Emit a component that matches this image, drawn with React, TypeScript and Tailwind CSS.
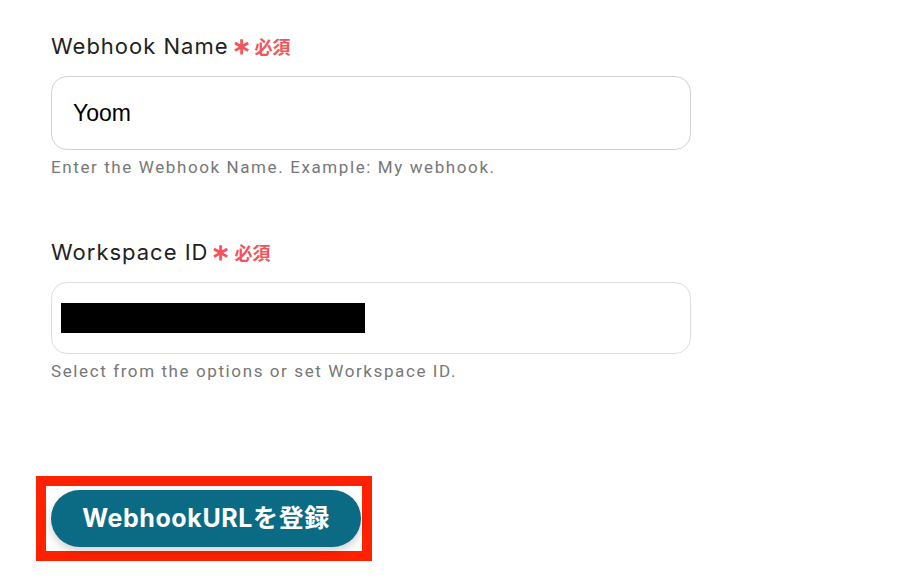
import React from 'react';

const Label: React.FC<{ text: string }> = ({ text }) => (
  <div className="flex items-center h-[28px] font-['Inter',sans-serif]">
    <span className="text-[22px] text-[#222] tracking-[1px]">{text}</span>
    <span className="ml-[3px] text-[23px] leading-none text-[#f2555a] font-bold">∗</span>
    <span className="ml-[4px] text-[18px] text-[#f2555a] font-bold font-['Noto_Sans_CJK_JP',sans-serif]">必須</span>
  </div>
);

export default function App() {
  return (
    <div className="w-[918px] h-[586px] bg-white overflow-hidden">
      <div className="pl-[51px] pt-[32px] w-[691px]">
        <Label text="Webhook Name" />
        <div className="mt-[16px] h-[74px] rounded-[16px] border border-[#d2d2d2] flex items-center px-[21px]">
          <span className="text-[23px] text-black font-['Liberation_Sans',sans-serif]">Yoom</span>
        </div>
        <div className="mt-[5px] text-[17px] text-[#777] tracking-[1.6px] font-['Roboto',sans-serif]">
          Enter the Webhook Name. Example: My webhook.
        </div>

        <div className="mt-[58px]">
          <Label text="Workspace ID" />
        </div>
        <div className="mt-[15px] h-[72px] rounded-[16px] border border-[#dedede] flex items-center px-[9px]">
          <div className="w-[304px] h-[30px] bg-black" />
        </div>
        <div className="mt-[5px] text-[17px] text-[#777] tracking-[1.6px] font-['Roboto',sans-serif]">
          Select from the options or set Workspace ID.
        </div>
      </div>

      <div className="ml-[36px] mt-[92px] w-[336px] h-[85px] border-[10px] border-[#ff2200] bg-white flex items-center pl-[5px]">
        <button className="w-[310px] h-[57px] rounded-full bg-[#0c6b84] text-white text-[25px] tracking-[0.6px] font-bold shadow-[0_4px_10px_rgba(0,0,0,0.18)] font-['Inter','Noto_Sans_CJK_JP',sans-serif]">
          WebhookURLを登録
        </button>
      </div>
    </div>
  );
}
